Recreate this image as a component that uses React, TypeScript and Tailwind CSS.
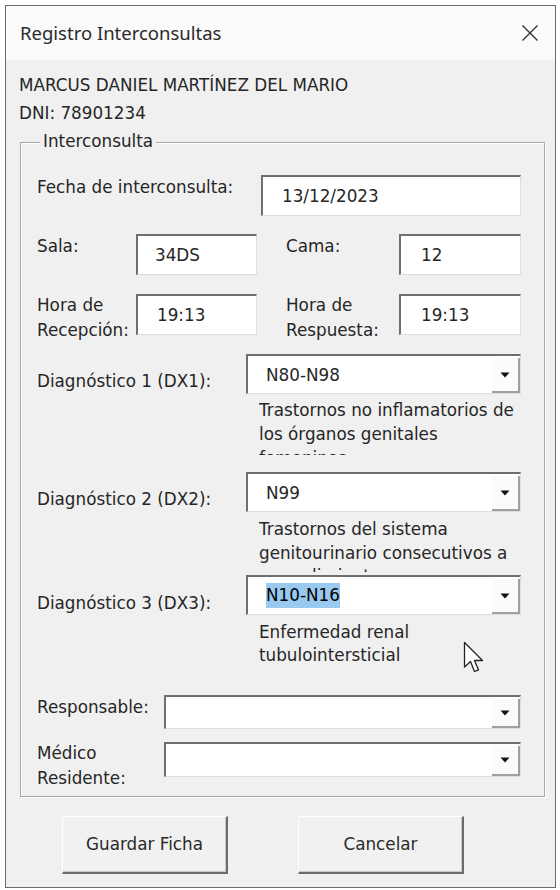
import React from 'react';

const font = { fontFamily: '"DejaVu Sans", Verdana, sans-serif' };

const TextBox = ({ value, width, pl }: { value: string; width: string; pl: string }) => (
  <div
    className={`${width} ${pl} h-[41px] flex items-center bg-white border-t-2 border-l-2 border-r border-b border-t-[#6f6f6f] border-l-[#6f6f6f] border-r-[#dedede] border-b-[#dedede]`}
  >
    <span>{value}</span>
  </div>
);

const Combo = ({
  value,
  width,
  height,
  selected,
}: {
  value?: string;
  width: string;
  height: string;
  selected?: boolean;
}) => (
  <div
    className={`${width} ${height} flex items-stretch bg-white border-t-2 border-l-2 border-r border-b border-t-[#6f6f6f] border-l-[#6f6f6f] border-r-[#dedede] border-b-[#dedede]`}
  >
    <div className="flex-1 flex items-center pl-[18px]">
      {value &&
        (selected ? (
          <span className="bg-[#99c9ef] leading-[25px] text-black">{value}</span>
        ) : (
          <span>{value}</span>
        ))}
    </div>
    <div className="w-[28px] flex items-center justify-center bg-[#fbfbfb] border-r-2 border-b-2 border-r-[#a0a0a0] border-b-[#a0a0a0] mt-[2px]">
      <svg width="10" height="6" viewBox="0 0 10 6">
        <path d="M0.5 0.5 H9.5 L5 5.5 Z" fill="#111" />
      </svg>
    </div>
  </div>
);

const Button = ({ children }: { children: React.ReactNode }) => (
  <button className="w-[166px] h-[58px] bg-[#f1f1f1] border-t border-l border-t-[#ffffff] border-l-[#ffffff] border-r-2 border-b-2 border-r-[#6c6c6c] border-b-[#6c6c6c] shadow-[inset_-1px_-1px_0_#c8c8c8] text-[#2a2a2a]">
    {children}
  </button>
);

export default function App() {
  return (
    <div className="w-[560px] h-[890px] bg-white pt-[5px] pl-[5px] overflow-hidden" style={font}>
      <div className="relative w-[551px] h-[883px] border border-[#6b6b6b] bg-[#f0f0f0] flex flex-col text-[16.8px] text-[#262626]">
        {/* title bar */}
        <div className="h-[54px] bg-[#fbfbfb] flex items-center justify-between pl-[14px] pr-[16px]">
          <span className="text-[18.5px] text-[#2a2a2a]" style={{ fontFamily: '"Noto Sans", "Open Sans", sans-serif' }}>
            Registro Interconsultas
          </span>
          <svg width="18" height="18" viewBox="0 0 18 18">
            <path d="M1.5 1.5 L16.5 16.5 M16.5 1.5 L1.5 16.5" stroke="#333" strokeWidth="1.4" />
          </svg>
        </div>

        {/* body */}
        <div className="flex-1 flex flex-col">
          <div className="mt-[11px] pl-[13px] leading-[28px]">
            <div>MARCUS DANIEL MARTÍNEZ DEL MARIO</div>
            <div>DNI: 78901234</div>
          </div>

          {/* group box */}
          <div className="relative mt-[15px] ml-[14px] w-[525px] border border-[#a8a8a8] shadow-[inset_1px_1px_0_#ffffff,1px_1px_0_#ffffff] pl-[16px] pr-[23px] pt-[32px] pb-[5px] leading-[24px]">
            <span className="absolute top-[-14px] left-[19px] px-[3px] bg-[#f0f0f0]">Interconsulta</span>

            {/* fecha */}
            <div className="flex items-start justify-between">
              <span>Fecha de interconsulta:</span>
              <TextBox value="13/12/2023" width="w-[260px]" pl="pl-[19px]" />
            </div>

            {/* sala / cama */}
            <div className="flex items-start mt-[18px]">
              <span className="w-[99px]">Sala:</span>
              <TextBox value="34DS" width="w-[121px]" pl="pl-[17px]" />
              <span className="w-[113px] ml-[29px]">Cama:</span>
              <TextBox value="12" width="w-[122px]" pl="pl-[20px]" />
            </div>

            {/* horas */}
            <div className="flex items-start mt-[18px]">
              <span className="w-[99px] leading-[25px]">
                Hora de
                <br />
                Recepción:
              </span>
              <div className="mt-[1px]">
                <TextBox value="19:13" width="w-[121px]" pl="pl-[19px]" />
              </div>
              <span className="w-[113px] ml-[29px] leading-[25px]">
                Hora de
                <br />
                Respuesta:
              </span>
              <div className="mt-[1px]">
                <TextBox value="19:13" width="w-[122px]" pl="pl-[20px]" />
              </div>
            </div>

            {/* diagnostico 1 */}
            <div className="flex items-start mt-[11px]">
              <span className="w-[209px] mt-[15px]">Diagnóstico 1 (DX1):</span>
              <Combo value="N80-N98" width="w-[275px]" height="h-[40px]" />
            </div>
            <div className="ml-[222px] mt-[4px] w-[262px] h-[57px] overflow-hidden leading-[24px]">
              Trastornos no inflamatorios de los órganos genitales femeninos
            </div>

            {/* diagnostico 2 */}
            <div className="flex items-start mt-[17px]">
              <span className="w-[209px] mt-[15px]">Diagnóstico 2 (DX2):</span>
              <Combo value="N99" width="w-[275px]" height="h-[40px]" />
            </div>
            <div className="ml-[222px] mt-[6px] w-[262px] h-[54px] overflow-hidden leading-[23.5px]">
              Trastornos del sistema genitourinario consecutivos a procedimientos, no clasificados en otra parte
            </div>

            {/* diagnostico 3 */}
            <div className="flex items-start mt-[3px]">
              <span className="w-[209px] mt-[16px]">Diagnóstico 3 (DX3):</span>
              <Combo value="N10-N16" width="w-[275px]" height="h-[40px]" selected />
            </div>
            <div className="ml-[222px] mt-[6px] w-[262px] h-[46px] overflow-hidden leading-[23px]">
              Enfermedad renal tubulointersticial
            </div>

            {/* responsable */}
            <div className="flex items-start mt-[28px]">
              <span className="w-[127px]">Responsable:</span>
              <Combo width="w-[357px]" height="h-[34px]" />
            </div>

            {/* medico residente */}
            <div className="flex items-start mt-[12px]">
              <span className="w-[127px] leading-[25px]">
                Médico
                <br />
                Residente:
              </span>
              <div className="mt-[1px]">
                <Combo width="w-[357px]" height="h-[35px]" />
              </div>
            </div>
          </div>

          {/* buttons */}
          <div className="flex mt-[19px] ml-[56px] gap-[70px]">
            <Button>Guardar Ficha</Button>
            <Button>Cancelar</Button>
          </div>
        </div>

        {/* mouse pointer */}
        <svg
          className="absolute left-[457px] top-[635px]"
          width="22"
          height="34"
          viewBox="0 0 22 34"
        >
          <path
            d="M1.5 1.5 L1.5 26 L7.5 20.5 L11.5 30.5 L15.5 28.8 L11.5 19.5 L19.5 19.5 Z"
            fill="#ffffff"
            stroke="#222"
            strokeWidth="1.3"
            strokeLinejoin="round"
          />
        </svg>
      </div>
    </div>
  );
}
